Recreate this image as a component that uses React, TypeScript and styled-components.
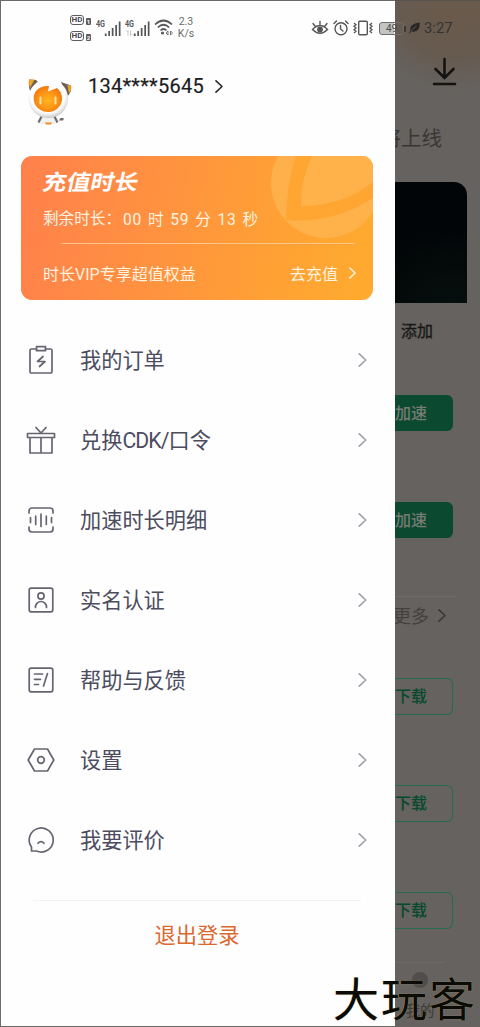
import React from "react";
import styled, { createGlobalStyle } from "styled-components";

const Global = createGlobalStyle`
  * { box-sizing: border-box; }
  body { margin: 0; background: #666; }
  svg { display: block; flex: none; }
`;

const Screen = styled.div`
  position: relative;
  width: 480px;
  height: 1027px;
  overflow: hidden;
  display: grid;
  grid-template-columns: 395px 85px;
  font-family: Roboto, "Noto Sans CJK SC", sans-serif;
  color: #4c4c5e;
  white-space: nowrap;
`;

/* ---------- status bar ---------- */

const StatusBar = styled.div`
  position: absolute;
  top: 12px;
  left: 70px;
  width: 384px;
  height: 32px;
  display: flex;
  align-items: center;
  color: #55555a;
  z-index: 2;
`;

const HdColumn = styled.div`
  display: flex;
  flex-direction: column;
  gap: 6px;
`;

const HdRow = styled.div`
  display: flex;
  align-items: flex-end;
  gap: 2px;
`;

const HdTag = styled.span`
  width: 14px;
  height: 10px;
  border-radius: 3px;
  border: 1.5px solid #5c5c60;
  color: #4a4a4e;
  font: 700 8px/8px Roboto, sans-serif;
  text-align: center;
`;

const SimTag = styled.span`
  width: 5px;
  height: 7px;
  border-radius: 1px;
  background: #5c5c60;
  color: #fff;
  font: 700 6px/7px Roboto, sans-serif;
  text-align: center;
`;

const SignalGroup = styled.div`
  display: flex;
  gap: 4px;
  margin-left: 5px;
`;

const NetSpeed = styled.div`
  width: 18px;
  margin-left: 3px;
  font-size: 10.5px;
  line-height: 12.5px;
  text-align: center;
  color: #6b6b6b;
`;

const StatusRight = styled.div`
  margin-left: auto;
  display: flex;
  align-items: center;
  gap: 4px;
`;

const Battery = styled.div`
  position: relative;
  width: 25px;
  height: 13px;
  margin: 0 1px 0 2px;
  border: 1px solid #6d6d6d;
  border-radius: 3px;
  background: linear-gradient(90deg, #c4c4c4 14px, transparent 14px);
  font-size: 10px;
  line-height: 12px;
  text-align: center;
  color: #4c4c4c;
  &::after {
    content: "";
    position: absolute;
    right: -3px;
    top: 3px;
    width: 2px;
    height: 6px;
    background: #3a3835;
  }
`;

const Clock = styled.span`
  width: 30px;
  font-size: 14.8px;
  line-height: 18px;
  color: #353330;
`;

/* ---------- drawer ---------- */

const Drawer = styled.aside`
  display: flex;
  flex-direction: column;
  background: #fefefe;
  border: 1px solid #6a6a66;
  border-right: none;
  padding-left: 20px;
`;

const Profile = styled.header`
  display: flex;
  margin-top: 75px;
  height: 80px;
  padding-left: 7px;
`;

const Avatar = styled.div`
  padding-top: 3px;
`;

const Phone = styled.div`
  display: flex;
  align-items: center;
  height: 20px;
  margin-left: 16px;
  gap: 11px;
  color: #1d1d1f;
`;

const PhoneNumber = styled.span`
  width: 116px;
  font-size: 20px;
  letter-spacing: 0.25px;
  -webkit-text-stroke: 0.2px #1d1d1f;
`;

const Card = styled.section`
  position: relative;
  overflow: hidden;
  width: 352px;
  height: 144px;
  border-radius: 11px;
  background: linear-gradient(100deg, #ff804c 0%, #ff9140 38%, #ffa035 70%, #ffab2e 100%);
  color: #fff3e0;
  padding: 13px 17px 0 22px;
  display: flex;
  flex-direction: column;
`;

const CardArt = styled.svg`
  position: absolute;
  right: 0;
  top: 0;
`;

const CardTitle = styled.h2`
  position: relative;
  margin: 0;
  width: max-content;
  font-size: 21.5px;
  line-height: 28px;
  font-weight: 700;
  color: #fff;
  transform-origin: left center;
  transform: skewX(-12deg) scaleX(1.11);
`;

const Remaining = styled.div`
  position: relative;
  margin-top: 8px;
  height: 24px;
  display: flex;
  align-items: center;
  font-size: 15.6px;
`;

const Countdown = styled.span`
  margin: 1px 0 0 2px;
  word-spacing: 1.6px;
  letter-spacing: 0.65px;
`;

const CardRule = styled.div`
  height: 1px;
  margin: 14px 1px 0 18px;
  background: #ffc489;
`;

const CardFooter = styled.div`
  display: flex;
  align-items: center;
  margin-top: 17px;
  height: 24px;
  font-size: 16px;
`;

const Recharge = styled.span`
  margin-left: auto;
  display: flex;
  align-items: center;
  gap: 11px;
`;

const Menu = styled.nav`
  margin-top: 20px;
`;

const MenuItem = styled.div`
  display: flex;
  align-items: center;
  height: 80px;
  padding-right: 28px;
`;

const MenuIcon = styled.svg`
  width: 30px;
  height: 30px;
  margin-left: 5px;
  fill: none;
  stroke: #666672;
  stroke-width: 1.7;
  stroke-linecap: round;
  stroke-linejoin: round;
`;

const MenuLabel = styled.span`
  flex: 1;
  margin: 2px 0 0 24px;
  font-size: 21.2px;
  line-height: 30px;
`;

const Latin = styled.span`
  letter-spacing: -0.9px;
`;

const Divider = styled.div`
  height: 1px;
  margin: 20px 34px 0 12px;
  background: #f2f2f2;
`;

const Logout = styled.div`
  margin: 19px 22px 0 0;
  text-align: center;
  font-size: 21.2px;
  line-height: 32px;
  color: #dd672d;
`;

/* ---------- dimmed page behind the drawer ---------- */

const Page = styled.main`
  overflow: hidden;
  display: flex;
  flex-direction: column;
  border-top: 1px solid #55534f;
  background:
    radial-gradient(ellipse 90px 90px at 60px 0, #6a5a4b 0, #675a4f 60%, transparent 100%),
    #65625f;
  color: #383633;
`;

const PageTop = styled.div`
  display: flex;
  justify-content: flex-end;
  height: 124px;
  padding: 56px 23px 0 0;
`;

const Upcoming = styled.div`
  display: flex;
  justify-content: flex-end;
  width: 47px;
  height: 28px;
  overflow: hidden;
  font-size: 20.5px;
  line-height: 29px;
`;

const Banner = styled.div`
  width: 72px;
  height: 121px;
  margin-top: 29px;
  border-radius: 0 13px 0 0;
  background: radial-gradient(circle at 80% 110%, #07110f, #020507 60%);
`;

const Add = styled.div`
  margin: 17px 0 0 6px;
  font-size: 16px;
  line-height: 24px;
  color: #181716;
  -webkit-text-stroke: 0.3px #181716;
`;

const PageButton = styled.div<{ $outline?: boolean; $top: number }>`
  width: 58px;
  height: ${(p) => (p.$outline ? 37 : 36)}px;
  flex: none;
  margin-top: ${(p) => p.$top}px;
  display: flex;
  align-items: center;
  justify-content: flex-end;
  padding: 0 ${(p) => (p.$outline ? "25px 3px" : "26px 2px")} 0;
  overflow: hidden;
  border-radius: 0 6px 6px 0;
  border: ${(p) => (p.$outline ? "1px solid #286a4e" : "none")};
  border-left: none;
  background: ${(p) => (p.$outline ? "transparent" : "#0b4a31")};
  color: ${(p) => (p.$outline ? "#07492d" : "#767b73")};
  font-size: 16px;
  font-weight: 500;
`;

const PageRule = styled.div`
  width: 61px;
  height: 1px;
  flex: none;
  margin-top: 58px;
  background: #6e6b68;
`;

const More = styled.div`
  display: flex;
  align-items: center;
  justify-content: flex-end;
  width: 51px;
  height: 30px;
  margin-top: 3px;
  gap: 9px;
  font-size: 18px;
  color: #43413f;
`;

const TabBar = styled.div`
  flex: 1;
  margin-top: 33px;
  border-top: 1px solid #6c6966;
  display: flex;
  flex-direction: column;
  align-items: center;
  width: 50px;
  font-size: 14.5px;
  line-height: 20px;
  color: #3a3937;
`;

const TabDot = styled.i`
  width: 16px;
  height: 16px;
  margin: 9px 0 14px;
  border-radius: 50%;
  background: #504d4b;
`;

const Watermark = styled.div`
  position: absolute;
  left: 333px;
  top: 965px;
  font-family: "Noto Sans CJK SC", sans-serif;
  font-size: 46px;
  line-height: 62px;
  letter-spacing: 2px;
  color: #0b0b08;
  text-shadow: 0 0 1px #c9b873;
  z-index: 3;
`;

type ChevronProps = { color: string; w?: number; h?: number; sw?: number };

const Chevron = ({ color, w = 8, h = 13, sw = 1.6 }: ChevronProps) => (
  <svg width={w} height={h} viewBox="0 0 8 13" fill="none" stroke={color} strokeWidth={sw} strokeLinecap="round" strokeLinejoin="round">
    <path d="M1 .8 7 6.5 1 12.2" />
  </svg>
);

const Signal = ({ arrows }: { arrows?: boolean }) => (
  <svg width="25" height="20" viewBox="0 0 25 20" fill="#55555a">
    <text x="0" y="9" fontSize="9" fontWeight="700" textLength="9" lengthAdjust="spacingAndGlyphs" fontFamily="Roboto">4G</text>
    {arrows && <path d="M3 12.500v5M1.500 14 3 12.500M5.500 12.500v5M5.500 17.500 7 16" stroke="#c9c9c9" fill="none" />}
    <path d="M8.800 15.500h1.800V18h-1.800zM12.300 13h1.700v5h-1.700zM15.800 10h1.700v8h-1.700zM19.300 7H21v11h-1.700zM22.800 3.500h1.700V18h-1.700z" />
  </svg>
);

const Wifi = () => (
  <svg width="20" height="18" viewBox="0 0 20 18" fill="none" stroke="#55555a" strokeWidth="1.7">
    <path d="M1 6.500Q9.500-1.500 18 6.500M3.800 9.500Q9.500 4 15.200 9.500M6.500 12.500Q9.500 9.500 12.500 12.500" />
    <circle cx="8.500" cy="15" r=".7" />
    <path d="M14 13v4l-2-2ZM16.500 13v4l2-2Z" strokeWidth=".8" />
  </svg>
);

const Eye = () => (
  <svg width="18" height="16" viewBox="0 0 18 16" fill="none" stroke="#555" strokeWidth="1.4" strokeLinecap="round">
    <path d="M1.500 9.500Q9 1.500 16.500 9.500 9 17 1.500 9.500ZM9 4.500V1.500M4 6 2 3.500M14 6 16 3.500" />
    <circle cx="9" cy="9.500" r="2.200" fill="#555" />
  </svg>
);

const Alarm = () => (
  <svg width="16" height="16" viewBox="0 0 16 16" fill="none" stroke="#555" strokeWidth="1.4" strokeLinecap="round">
    <circle cx="8" cy="8.700" r="6" />
    <path d="M7.500 5.500V9L10 11M1 3.500 3.500 1M15 3.500 12.500 1" />
  </svg>
);

const Vibrate = () => (
  <svg width="20" height="16" viewBox="0 0 20 16" fill="none" stroke="#555" strokeWidth="1.4">
    <rect x="5.700" y="1.200" width="8.600" height="13.600" rx="1" />
    <path d="M1 3 3 4.700 1 6.300 3 8 1 9.700 3 11.300 1 13M19 3 17 4.700 19 6.300 17 8 19 9.700 17 11.300 19 13" strokeWidth="1.3" />
  </svg>
);

const Leaf = () => (
  <svg width="11" height="12" viewBox="0 0 11 12" fill="#282725">
    <path d="M10.800.5Q11 10 4.500 9.700L2 9.300.8 11.500 0 11 1.500 8.500Q-.5 2 10.800.5Z" />
    <path d="M2 8.500 7.500 4" stroke="#69645e" strokeWidth=".7" />
  </svg>
);

const Mascot = () => (
  <svg width="44" height="46" viewBox="0 0 44 46">
    <defs>
      <radialGradient id="head" cx=".48" cy=".42" r=".62">
        <stop offset=".7" stopColor="#fff" />
        <stop offset=".87" stopColor="#dedede" />
        <stop offset="1" stopColor="#a2a2a2" />
      </radialGradient>
      <radialGradient id="face" cx=".5" cy=".55" r=".55">
        <stop offset="0" stopColor="#ffb51e" />
        <stop offset=".6" stopColor="#fb9417" />
        <stop offset="1" stopColor="#f3780c" />
      </radialGradient>
    </defs>
    <path d="M1 .5 8 1 12 5 3 14Q0 8 1 .5Z" fill="#6a625a" />
    <path d="M1 .5h5.500L2 9Q.5 5 1 .5Z" fill="#f5a21d" />
    <path d="M33 3 43 6.500Q44 13 39 18Z" fill="#6a625a" />
    <path d="M39.500 6l3.500.5Q44 11 41 14Z" fill="#f5a21d" />
    <path d="M13 37h14l2 8H11Z" fill="#f1f1f1" />
    <path d="M13.500 37.500 10.500 43.500M26.500 37.500 29.500 43.500" stroke="#6c6c6c" strokeWidth="2.2" />
    <path d="M17 43.500h7l-1 2h-5Z" fill="#f58b19" />
    <path d="M31 41.500Q32 37.500 36 39.500L35 41.500Z" fill="#6c6c6c" />
    <ellipse cx="20.300" cy="19.500" rx="19.800" ry="19.400" fill="url(#head)" />
    <path d="M21 7 20 12.500 29 9A14.200 13.600 0 1 1 8 12Q13 6.500 21 7Z" fill="url(#face)" />
    <path d="M12.500 18.500v6M27.500 18.500v6" stroke="#ffe49a" strokeWidth="2" strokeLinecap="round" />
  </svg>
);

const items: { id: string; label: React.ReactNode; icon: React.ReactNode }[] = [
  {
    id: "orders",
    label: "我的订单",
    icon: (
      <>
        <path d="M10.500 4H5.500A1.500 1.500 0 0 0 4 5.500V26.500A1.500 1.500 0 0 0 5.500 28H24.500A1.500 1.500 0 0 0 26 26.500V5.500A1.500 1.500 0 0 0 24.500 4H19.500" />
        <path d="M10.500 1.700h9v4h-9zM17 11.500 11.500 16.500H19L13.500 21.500" />
      </>
    ),
  },
  {
    id: "redeem",
    label: <>兑换<Latin>CDK/</Latin>口令</>,
    icon: <path d="M1.500 8.500H28.500V12.500H1.500ZM4 12.500V28H26V12.500M15 12.500V28M10 2.500 15 8 20 2.500" />,
  },
  {
    id: "usage",
    label: "加速时长明细",
    icon: (
      <path d="M3 8V6A3 3 0 0 1 6 3H24A3 3 0 0 1 27 6V8M3 22V24A3 3 0 0 0 6 27H24A3 3 0 0 0 27 24V22M4.500 12.500v5M9.700 11v8.500M15 9v12.500M20.300 11v8.500M25.500 12.500v5" />
    ),
  },
  {
    id: "identity",
    label: "实名认证",
    icon: (
      <>
        <rect x="3.200" y="3.200" width="23.600" height="23.600" rx="2" />
        <circle cx="15" cy="11" r="3.100" />
        <path d="M9.500 22.500V22a5.500 5.500 0 0 1 11 0v.5" />
      </>
    ),
  },
  {
    id: "help",
    label: "帮助与反馈",
    icon: (
      <>
        <rect x="3.200" y="3.200" width="23.600" height="23.600" rx="2" />
        <path d="M8.500 9h8M8.500 14.300h6M8.500 19.500h4M21.500 8.500 17.500 21" />
      </>
    ),
  },
  {
    id: "settings",
    label: "设置",
    icon: (
      <>
        <path d="M8.500 4H21.500L27.800 15 21.500 26H8.500L2.200 15Z" />
        <circle cx="15" cy="15" r="3.300" />
      </>
    ),
  },
  {
    id: "review",
    label: "我要评价",
    icon: (
      <>
        <path d="M5.500 22A12 12 0 1 1 10.500 26L5.500 26Z" />
        <path d="M12 18.300Q15 14.800 18 18.300" />
      </>
    ),
  },
];

export default function App() {
  return (
    <Screen>
      <Global />
      <StatusBar>
        <HdColumn>
          <HdRow><HdTag>HD</HdTag><SimTag>1</SimTag></HdRow>
          <HdRow><HdTag>HD</HdTag><SimTag>2</SimTag></HdRow>
        </HdColumn>
        <SignalGroup>
          <Signal />
          <Signal arrows />
          <Wifi />
        </SignalGroup>
        <NetSpeed>2.3<br />K/s</NetSpeed>
        <StatusRight>
          <Eye />
          <Alarm />
          <Vibrate />
          <Battery>49</Battery>
          <Leaf />
          <Clock>3:27</Clock>
        </StatusRight>
      </StatusBar>

      <Drawer>
        <Profile>
          <Avatar><Mascot /></Avatar>
          <Phone>
            <PhoneNumber>134****5645</PhoneNumber>
            <Chevron color="#2b2b2d" />
          </Phone>
        </Profile>

        <Card>
          <CardArt width="110" height="90" viewBox="0 0 110 90">
            <circle cx="63" cy="27" r="55" fill="#ffb653" fillOpacity=".75" />
            <path d="M33 0Q24 25 23 64 70 68 110 42V26Q80 50 38 50 38 22 49 0Z" fill="#ffa632" />
          </CardArt>
          <CardTitle>充值时长</CardTitle>
          <Remaining>剩余时长：<Countdown>00 时 59 分 13 秒</Countdown></Remaining>
          <CardRule />
          <CardFooter>
            时长VIP专享超值权益
            <Recharge>去充值<Chevron color="#fff3e0" w={7} h={12} sw={1.8} /></Recharge>
          </CardFooter>
        </Card>

        <Menu>
          {items.map((it) => (
            <MenuItem key={it.id}>
              <MenuIcon viewBox="0 0 30 30">{it.icon}</MenuIcon>
              <MenuLabel>{it.label}</MenuLabel>
              <Chevron color="#a3a3ad" w={9} h={14} />
            </MenuItem>
          ))}
        </Menu>
        <Divider />
        <Logout>退出登录</Logout>
      </Drawer>

      <Page>
        <PageTop>
          <svg width="25" height="30" viewBox="0 0 25 30" fill="none" stroke="#141312" strokeWidth="2.6" strokeLinecap="round">
            <path d="M12.500 2V20M3.500 12 12.500 21 21.500 12M2 27H23" />
          </svg>
        </PageTop>
        <Upcoming>将上线</Upcoming>
        <Banner />
        <Add>添加</Add>
        <PageButton $top={51}>加速</PageButton>
        <PageButton $top={71}>加速</PageButton>
        <PageRule />
        <More>更多<Chevron color="#3a3836" /></More>
        <PageButton $outline $top={48}>下载</PageButton>
        <PageButton $outline $top={70}>下载</PageButton>
        <PageButton $outline $top={70}>下载</PageButton>
        <TabBar><TabDot />我的</TabBar>
      </Page>
      <Watermark>大玩客</Watermark>
    </Screen>
  );
}
